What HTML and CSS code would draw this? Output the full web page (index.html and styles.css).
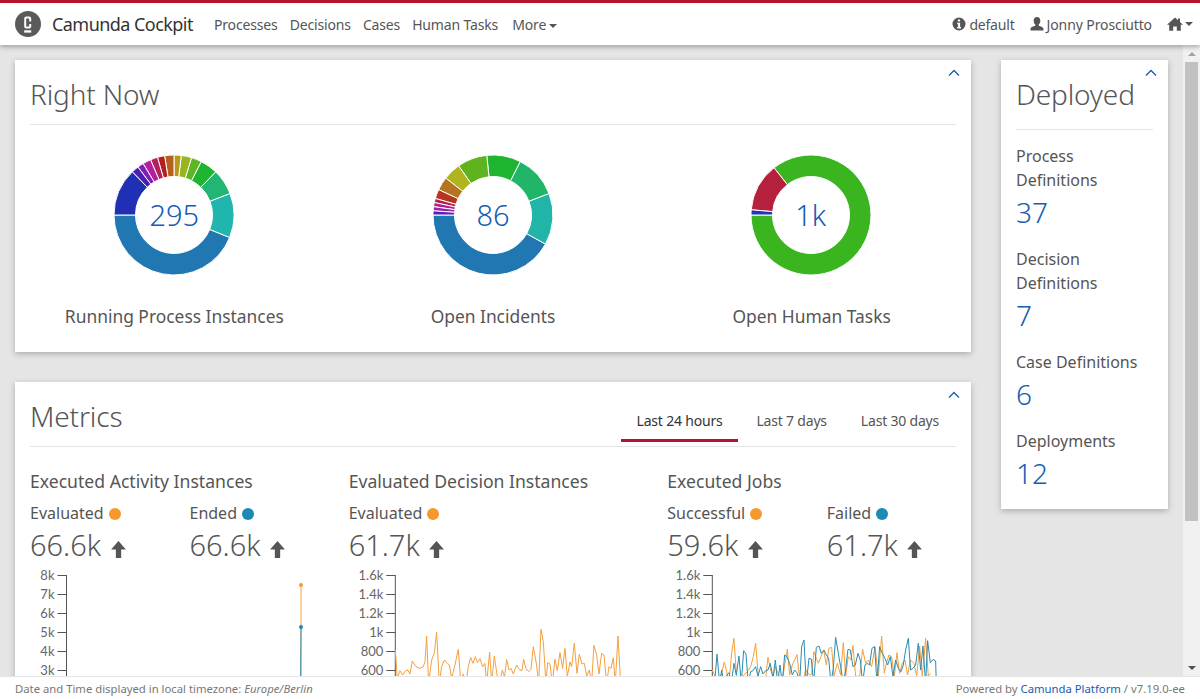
FILE: index.html
```html
<!DOCTYPE html>
<html lang="en">
<head>
  <meta charset="UTF-8">
  <title>Camunda Cockpit</title>
  <link rel="stylesheet" href="styles.css">
</head>
<body>

  <header class="navbar">
    <svg class="logo" viewBox="0 0 26 26">
      <circle cx="13" cy="13" r="13" fill="#5a5a5a"/>
      <path d="M15.200 10.500V7.500a1 1 0 0 0-1-1H11.200a1 1 0 0 0-1 1v8a1 1 0 0 0 1 1h3a1 1 0 0 0 1-1v-2.500" fill="none" stroke="#fff" stroke-width="2"/>
      <rect x="9.200" y="19.300" width="7" height="2.300" fill="#fff"/>
    </svg>
    <span class="brand">Camunda Cockpit</span>
    <nav class="nav-links">
      <a>Processes</a>
      <a>Decisions</a>
      <a>Cases</a>
      <a>Human Tasks</a>
      <a class="more">More <i class="caret"></i></a>
    </nav>
    <div class="nav-right">
      <a class="engine">
        <svg class="nav-icon" viewBox="0 0 14 14"><path fill-rule="evenodd" d="M7 .5a6.500 6.500 0 1 0 0 13a6.500 6.500 0 0 0 0-13zM5.900 2.600h2.200v2H5.900zM5.200 5.800h2.900v4.300h.9v1.400H5.100v-1.400h1V7.200h-.9z" fill="#555"/></svg>
        default
      </a>
      <a class="user">
        <svg class="nav-icon" viewBox="1 .5 12 13"><path d="M7 .5c2 0 3.100 1.500 3.100 3.400c0 1.500-.6 2.800-1.500 3.500v1.200c1.800.7 4.400 1.300 4.400 3v1.400H1v-1.400c0-1.700 2.600-2.300 4.400-3V7.400C4.500 6.700 3.900 5.400 3.900 3.900C3.900 2 5 .5 7 .5z" fill="#555"/></svg>
        Jonny Prosciutto
      </a>
      <a class="home">
        <svg class="home-icon" viewBox="0 0 16 14"><path d="M8 .5l3 2.700V1.500h2v3.500l3 2.700h-2.200v6H9.800V9.500H6.200v4.200H2.200v-6H0z" fill="#555"/></svg>
        <i class="caret"></i>
      </a>
    </div>
  </header>

  <div class="workspace">
    <main class="dashboard">
      <div class="left-col">

        <section class="card">
          <svg class="chevron" viewBox="0 0 12 8"><path d="M1 6.500L6 1.500l5 5" fill="none" stroke="#155cb5" stroke-width="1.300"/></svg>
          <h2 class="card-title">Right Now</h2>
          <div class="donut-row">
            <div class="donut-col">
              <div class="donut" data-donut="running"><span class="donut-value">295</span></div>
              <div class="donut-label">Running Process Instances</div>
            </div>
            <div class="donut-col">
              <div class="donut" data-donut="incidents"><span class="donut-value">86</span></div>
              <div class="donut-label">Open Incidents</div>
            </div>
            <div class="donut-col">
              <div class="donut" data-donut="tasks"><span class="donut-value">1k</span></div>
              <div class="donut-label">Open Human Tasks</div>
            </div>
          </div>
        </section>

        <section class="card metrics-card">
          <svg class="chevron" viewBox="0 0 12 8"><path d="M1 6.500L6 1.500l5 5" fill="none" stroke="#155cb5" stroke-width="1.300"/></svg>
          <div class="metrics-head">
            <h2 class="card-title">Metrics</h2>
            <ul class="tabs">
              <li class="active">Last 24 hours</li>
              <li>Last 7 days</li>
              <li>Last 30 days</li>
            </ul>
          </div>
          <div class="metrics-row">
            <div class="metric-col">
              <h3 class="metric-title">Executed Activity Instances</h3>
              <div class="metric-stats">
                <div class="stat">
                  <div class="stat-name">Evaluated <i class="dot orange"></i></div>
                  <div class="stat-value">66.6k <svg class="arrow" viewBox="0 0 14 16"><path d="M7 0l7 8H9.500v8h-5V8H0z"/></svg></div>
                </div>
                <div class="stat">
                  <div class="stat-name">Ended <i class="dot blue"></i></div>
                  <div class="stat-value">66.6k <svg class="arrow" viewBox="0 0 14 16"><path d="M7 0l7 8H9.500v8h-5V8H0z"/></svg></div>
                </div>
              </div>
              <svg class="chart" data-chart="activity"></svg>
            </div>
            <div class="metric-col">
              <h3 class="metric-title">Evaluated Decision Instances</h3>
              <div class="metric-stats">
                <div class="stat">
                  <div class="stat-name">Evaluated <i class="dot orange"></i></div>
                  <div class="stat-value">61.7k <svg class="arrow" viewBox="0 0 14 16"><path d="M7 0l7 8H9.500v8h-5V8H0z"/></svg></div>
                </div>
              </div>
              <svg class="chart" data-chart="decisions"></svg>
            </div>
            <div class="metric-col">
              <h3 class="metric-title">Executed Jobs</h3>
              <div class="metric-stats">
                <div class="stat">
                  <div class="stat-name">Successful <i class="dot orange"></i></div>
                  <div class="stat-value">59.6k <svg class="arrow" viewBox="0 0 14 16"><path d="M7 0l7 8H9.500v8h-5V8H0z"/></svg></div>
                </div>
                <div class="stat">
                  <div class="stat-name">Failed <i class="dot blue"></i></div>
                  <div class="stat-value">61.7k <svg class="arrow" viewBox="0 0 14 16"><path d="M7 0l7 8H9.500v8h-5V8H0z"/></svg></div>
                </div>
              </div>
              <svg class="chart" data-chart="jobs"></svg>
            </div>
          </div>
        </section>

      </div>

      <aside class="card deployed">
        <svg class="chevron" viewBox="0 0 12 8"><path d="M1 6.500L6 1.500l5 5" fill="none" stroke="#155cb5" stroke-width="1.300"/></svg>
        <h2 class="card-title">Deployed</h2>
        <div class="deployed-item">
          <div class="deployed-name">Process Definitions</div>
          <div class="deployed-count">37</div>
        </div>
        <div class="deployed-item">
          <div class="deployed-name">Decision Definitions</div>
          <div class="deployed-count">7</div>
        </div>
        <div class="deployed-item">
          <div class="deployed-name">Case Definitions</div>
          <div class="deployed-count">6</div>
        </div>
        <div class="deployed-item">
          <div class="deployed-name">Deployments</div>
          <div class="deployed-count">12</div>
        </div>
      </aside>
    </main>

    <div class="scrollbar">
      <i class="scroll-up"></i>
      <div class="scroll-track"><div class="scroll-thumb"></div></div>
      <i class="scroll-down"></i>
    </div>
  </div>

  <footer class="footer">
    <div>Date and Time displayed in local timezone: <em>Europe/Berlin</em></div>
    <div>Powered by <a>Camunda Platform</a> / v7.19.0-ee</div>
  </footer>

  <script src="charts.js"></script>
</body>
</html>
```

FILE: styles.css
```css
* {
  box-sizing: border-box;
}
html, body {
  height: 100%;
}
body {
  margin: 0;
  display: flex;
  flex-direction: column;
  overflow: hidden;
  font-family: 'Noto Sans', 'Open Sans', sans-serif;
  color: #555;
  background-color: #e5e5e5;
}

/* top bar */
.navbar {
  height: 45px;
  flex: none;
  display: flex;
  align-items: center;
  padding: 0 7px 0 15px;
  background-color: #fff;
  border-top: 3px solid #b5152b;
  box-shadow: 0 2px 5px rgba(0, 0, 0, 0.3);
  position: relative;
  z-index: 2;
  font-size: 14px;
}
.logo {
  width: 26px;
  height: 26px;
  margin-right: 11px;
}
.brand {
  font-size: 18px;
  color: #333;
  margin-right: 21px;
  letter-spacing: -0.55px;
}
.nav-links {
  display: flex;
  gap: 12px;
  letter-spacing: -0.15px;
}
.nav-links .more {
  margin-left: 2px;
}
.nav-links .caret {
  margin-left: -1px;
}
.nav-right {
  margin-left: auto;
  display: flex;
  align-items: center;
  gap: 15px;
  letter-spacing: -0.1px;
}
.nav-right a {
  display: flex;
  align-items: center;
  gap: 3px;
}
.nav-right .engine {
  letter-spacing: -0.2px;
}
.nav-right .home {
  gap: 0;
}
.nav-icon {
  width: 14px;
  height: 14px;
}
.home-icon {
  width: 16px;
  height: 14px;
}
.caret {
  display: inline-block;
  width: 0;
  height: 0;
  margin-left: 2px;
  vertical-align: middle;
  border-top: 4px solid #555;
  border-left: 4px solid transparent;
  border-right: 4px solid transparent;
}

/* page body */
.workspace {
  flex: 1;
  min-height: 0;
  display: flex;
}
.dashboard {
  flex: 1;
  min-width: 0;
  display: flex;
  align-items: flex-start;
  gap: 30px;
  padding: 15px;
  overflow: hidden;
}
.left-col {
  flex: 1;
  min-width: 0;
}
.card {
  position: relative;
  padding: 15px;
  background-color: #fff;
  box-shadow: 0 2px 6px rgba(0, 0, 0, 0.25);
}
.chevron {
  position: absolute;
  top: 9px;
  right: 11px;
  width: 12px;
  height: 8px;
}
.card-title {
  margin: 0;
  height: 50px;
  font-size: 28px;
  font-weight: 300;
  line-height: 38px;
  letter-spacing: -0.15px;
  border-bottom: 1px solid #e5e5e5;
}

/* right now */
.donut-row {
  display: flex;
  margin: 30px -15px 0;
}
.donut-col {
  width: 33.333%;
  text-align: center;
}
.donut {
  position: relative;
  width: 120px;
  height: 120px;
  margin: 0 auto;
}
.donut-col:last-child .donut {
  margin-left: calc(50% - 61px);
}
.donut svg {
  display: block;
}
.donut-value {
  position: absolute;
  inset: 0;
  display: flex;
  align-items: center;
  justify-content: center;
  padding-bottom: 2px;
  font-size: 29px;
  font-weight: 300;
  color: #155cb5;
}
.donut-label {
  margin-top: 27px;
  font-size: 17.4px;
  line-height: 28px;
  height: 35px;
}

/* metrics */
.metrics-card {
  margin-top: 30px;
  padding-bottom: 0;
}
.metrics-head {
  display: flex;
  justify-content: space-between;
  height: 50px;
  border-bottom: 1px solid #e5e5e5;
}
.metrics-head .card-title {
  border-bottom: none;
}
.tabs {
  display: flex;
  gap: 2px;
  margin: 0 1px 0 0;
  padding: 0;
  list-style: none;
  font-size: 14px;
  letter-spacing: -0.2px;
}
.tabs li {
  height: 45px;
  padding: 12px 16px 0;
  line-height: 24px;
  border-bottom: 3px solid transparent;
}
.tabs .active {
  color: #333;
  border-bottom-color: #b5152b;
}
.metrics-row {
  display: flex;
  margin: 0 -15px;
}
.metric-col {
  width: 33.333%;
  padding: 0 15px;
}
.metric-title {
  margin: 21px 0 0;
  font-size: 17.6px;
  font-weight: 400;
  line-height: 26px;
}
.metric-stats {
  display: flex;
  margin-top: 7px;
}
.stat {
  width: 159.5px;
  flex: none;
}
.stat-name {
  font-size: 16px;
  line-height: 24px;
}
.stat-value {
  font-size: 29px;
  font-weight: 300;
  line-height: 40px;
  white-space: nowrap;
}
.arrow {
  width: 15px;
  height: 17px;
  margin-left: 2px;
  vertical-align: -2px;
  fill: #555;
}
.dot {
  display: inline-block;
  width: 12px;
  height: 12px;
  margin-left: 1px;
  border-radius: 50%;
  vertical-align: -1px;
}
.orange {
  background-color: #f5992f;
}
.blue {
  background-color: #1c8ab5;
}
.chart {
  display: block;
  width: 100%;
  height: 130px;
  font-family: 'Lato', sans-serif;
  font-size: 13px;
}
.chart text {
  fill: #666;
  text-anchor: end;
}
.chart .axis {
  stroke: #555;
  fill: none;
}
.chart .line {
  fill: none;
  stroke-width: 1;
  stroke-linejoin: round;
}
.chart .line-orange {
  stroke: #f5a03c;
}
.chart .line-blue {
  stroke: #2a8db5;
}
.chart .point-orange {
  fill: #f5992f;
}
.chart .point-blue {
  fill: #1c8ab5;
}

/* deployed */
.deployed {
  width: 167px;
  flex: none;
  padding-bottom: 16px;
}
.deployed .card-title {
  height: 55px;
  margin-bottom: 14px;
}
.deployed-item {
  margin-bottom: 15px;
}
.deployed-item:last-child {
  margin-bottom: 0;
}
.deployed-name {
  font-size: 16px;
  line-height: 24px;
}
.deployed-count {
  font-size: 28px;
  font-weight: 300;
  line-height: 40px;
  color: #155cb5;
}

/* fake scrollbar, the headless browser draws none */
.scrollbar {
  width: 17px;
  flex: none;
  display: flex;
  flex-direction: column;
  background-color: #f1f1f1;
}
.scroll-track {
  flex: 1;
  padding: 0 2px;
}
.scroll-thumb {
  height: 459px;
  background-color: #c1c1c1;
}
.scroll-up, .scroll-down {
  height: 17px;
  flex: none;
  display: flex;
  justify-content: center;
  align-items: center;
}
.scroll-up::after, .scroll-down::after {
  content: "";
  border-left: 4px solid transparent;
  border-right: 4px solid transparent;
}
.scroll-up::after {
  border-bottom: 4px solid #a3a3a3;
}
.scroll-down::after {
  border-top: 4px solid #505050;
}

/* bottom bar */
.footer {
  height: 23px;
  flex: none;
  display: flex;
  justify-content: space-between;
  padding: 3px 15px 0;
  background-color: #fff;
  border-top: 1px solid #e5e5e5;
  font-size: 11.3px;
  line-height: 17px;
  color: #777;
}
.footer a {
  color: #155cb5;
}
```

FILE: charts.js
```js
// slices are end angles in degrees, counted counter clockwise from 9 o'clock
var donuts = {
  running: [
    [158, '#2077b2'], [201, '#20b5ad'], [226, '#22b573'], [243, '#20b530'],
    [253, '#5db625'], [263, '#97b51f'], [270, '#b59a1f'], [279, '#b5601f'],
    [286, '#b5201f'], [293, '#b51f5a'], [301, '#b51f9e'], [307, '#801fb5'],
    [314, '#4b1fb5'], [360, '#1f30b5']
  ],
  incidents: [
    [151, '#2077b2'], [201, '#20b5a8'], [243, '#20b569'], [276, '#20b530'],
    [305, '#5fb31f'], [322, '#b0b51f'], [335, '#b5741f'], [344, '#b5351f'],
    [348, '#b51f4a'], [352, '#b51f8c'], [356, '#a01fb5'], [360, '#5a1fb5']
  ],
  tasks: [
    [308, '#3ab520'], [355, '#b5203c'], [360, '#2036b5']
  ]
};

// chart lines, traced in 3x pixels
var decisionLine = [[166,300],[172,385],[180,362],[188,375],[197,362],[204,360],[210,372],[217,333],[228,350],[240,355],[250,350],[255,335],[260,258],[266,400],[275,330],[283,310],[290,247],[298,400],[305,350],[313,330],[322,340],[328,345],[335,385],[345,345],[355,298],[362,390],[370,372],[378,400],[385,350],[392,322],[399,340],[406,320],[413,338],[420,326],[428,350],[435,340],[440,400],[449,306],[455,400],[463,318],[472,380],[480,395],[487,360],[494,380],[500,328],[507,360],[513,355],[520,372],[530,345],[538,358],[546,362],[551,328],[558,355],[566,365],[573,358],[580,290],[590,345],[596,400],[603,238],[610,275],[618,400],[623,338],[630,342],[637,400],[645,328],[652,362],[660,308],[668,355],[675,295],[682,380],[690,336],[695,350],[703,280],[711,370],[718,313],[726,342],[733,340],[740,378],[748,360],[755,400],[762,286],[770,315],[777,372],[785,310],[792,315],[800,400],[807,350],[813,356],[820,323],[826,400],[834,258],[842,400]];
var jobsBlue = [[190,378],[197,400],[204,312],[212,400],[218,360],[225,400],[232,378],[240,368],[247,400],[255,340],[262,375],[270,318],[277,400],[284,302],[291,312],[298,400],[305,365],[312,362],[320,350],[327,378],[335,350],[342,372],[350,362],[357,360],[364,340],[372,385],[379,330],[386,400],[393,345],[400,400],[407,315],[414,320],[422,340],[430,375],[437,360],[444,368],[452,400],[458,290],[465,270],[472,400],[480,325],[487,327],[494,400],[502,292],[510,288],[517,310],[525,300],[532,315],[539,325],[546,400],[553,355],[560,262],[568,310],[575,350],[583,400],[590,360],[597,298],[604,300],[612,350],[619,345],[627,310],[634,330],[641,400],[648,345],[655,340],[662,345],[669,295],[677,290],[684,400],[692,290],[700,310],[708,325],[716,345],[724,320],[732,380],[740,330],[748,355],[756,365],[763,345],[770,300],[778,265],[785,360],[792,355],[800,345],[808,280],[815,360],[822,288],[830,400],[836,272],[844,338],[852,328],[860,333],[862,400]];
var jobsOrange = [[190,360],[198,378],[210,400],[218,370],[226,336],[233,365],[240,400],[248,310],[255,265],[262,370],[270,400],[285,375],[295,365],[305,350],[313,320],[320,280],[328,380],[340,400],[350,385],[357,322],[365,360],[372,378],[380,350],[390,378],[400,390],[408,340],[415,298],[422,375],[430,345],[437,330],[444,314],[452,385],[460,400],[470,360],[482,375],[488,372],[495,305],[502,325],[508,340],[516,320],[524,300],[532,345],[540,295],[548,292],[555,378],[565,340],[575,375],[583,278],[590,378],[598,320],[606,330],[612,286],[620,378],[632,380],[641,298],[650,340],[658,330],[668,350],[678,290],[688,378],[698,258],[706,370],[712,340],[720,315],[728,320],[736,380],[744,308],[752,370],[760,340],[768,330],[776,375],[784,330],[795,340],[803,378],[812,288],[820,378],[830,265],[838,378],[845,370]];

var charts = {
  activity: {
    axis: 36.5, labels: ['8k', '7k', '6k', '5k', '4k', '3k'],
    lines: [
      { cls: 'orange', points: [[271, 20], [271, 140]], marker: true },
      { cls: 'blue', points: [[271, 62], [270.500, 140]], marker: true }
    ]
  },
  decisions: {
    axis: 46.3, labels: ['1.6k', '1.4k', '1.2k', '1k', '800', '600'],
    lines: [{ cls: 'orange', points: scale(decisionLine, 166, 46.3) }]
  },
  jobs: {
    axis: 45.3, labels: ['1.6k', '1.4k', '1.2k', '1k', '800', '600'],
    lines: [
      { cls: 'orange', points: scale(jobsOrange, 190, 45.3) },
      { cls: 'blue', points: scale(jobsBlue, 190, 45.3) }
    ]
  }
};

function scale(points, startX, axis) {
  return points.map(function(p) {
    return [axis + (p[0] - startX) / 3, p[1] / 3 - 15];
  });
}

function polar(r, deg) {
  var rad = deg * Math.PI / 180;
  return (60 - r * Math.cos(rad)) + ' ' + (60 + r * Math.sin(rad));
}

function drawDonut(el) {
  var slices = donuts[el.dataset.donut];
  var html = '<svg width="120" height="120" viewBox="0 0 120 120">';
  var start = 0;
  slices.forEach(function(s) {
    var large = s[0] - start > 180 ? 1 : 0;
    html += '<path fill="' + s[1] + '" stroke="#fff" stroke-width="1" d="M' + polar(60, start) +
      'A60 60 0 ' + large + ' 0 ' + polar(60, s[0]) +
      'L' + polar(38.500, s[0]) +
      'A38.500 38.500 0 ' + large + ' 1 ' + polar(38.500, start) + 'Z"/>';
    start = s[0];
  });
  el.insertAdjacentHTML('afterbegin', html + '</svg>');
}

function drawChart(el) {
  var chart = charts[el.dataset.chart];
  var html = '';
  chart.labels.forEach(function(label, i) {
    var y = 10.5 + i * 19;
    html += '<text x="' + (chart.axis - 12) + '" y="' + (y + 4.5) + '">' + label + '</text>';
    html += '<path class="axis" d="M' + (chart.axis - 9) + ' ' + y + 'H' + chart.axis + '"/>';
  });
  html += '<path class="axis" d="M' + chart.axis + ' 10V130"/>';
  chart.lines.forEach(function(line) {
    html += '<polyline class="line line-' + line.cls + '" points="' + line.points.join(' ') + '"/>';
    if (line.marker) {
      html += '<circle class="point-' + line.cls + '" cx="' + line.points[0][0] + '" cy="' + line.points[0][1] + '" r="2"/>';
    }
  });
  el.innerHTML = html;
}

document.querySelectorAll('[data-donut]').forEach(drawDonut);
document.querySelectorAll('[data-chart]').forEach(drawChart);
```
